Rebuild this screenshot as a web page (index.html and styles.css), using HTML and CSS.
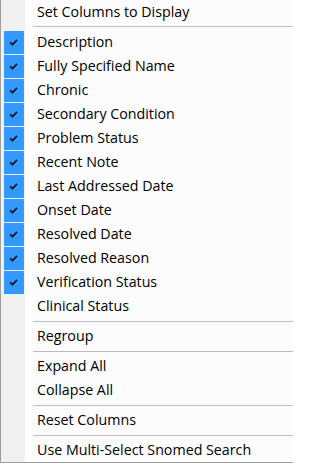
FILE: index.html
```html
<!DOCTYPE html>
<html>
<head>
<meta charset="utf-8">
<link rel="stylesheet" href="styles.css">
</head>
<body>
<div class="menu">
  <div class="item"><span class="gutter"></span><span class="label">Set Columns to Display</span></div>
  <div class="sep"><span class="gutter"></span><span class="line"></span></div>
  <div class="item checked"><span class="gutter"><span class="box"><svg width="9" height="7" viewBox="0 0 9 7"><path d="M1 3.2 L3.4 5.6 L8 1" fill="none" stroke="#000" stroke-width="1.6"/></svg></span></span><span class="label">Description</span></div>
  <div class="item checked"><span class="gutter"><span class="box"><svg width="9" height="7" viewBox="0 0 9 7"><path d="M1 3.2 L3.4 5.6 L8 1" fill="none" stroke="#000" stroke-width="1.6"/></svg></span></span><span class="label">Fully Specified Name</span></div>
  <div class="item checked"><span class="gutter"><span class="box"><svg width="9" height="7" viewBox="0 0 9 7"><path d="M1 3.2 L3.4 5.6 L8 1" fill="none" stroke="#000" stroke-width="1.6"/></svg></span></span><span class="label">Chronic</span></div>
  <div class="item checked"><span class="gutter"><span class="box"><svg width="9" height="7" viewBox="0 0 9 7"><path d="M1 3.2 L3.4 5.6 L8 1" fill="none" stroke="#000" stroke-width="1.6"/></svg></span></span><span class="label">Secondary Condition</span></div>
  <div class="item checked"><span class="gutter"><span class="box"><svg width="9" height="7" viewBox="0 0 9 7"><path d="M1 3.2 L3.4 5.6 L8 1" fill="none" stroke="#000" stroke-width="1.6"/></svg></span></span><span class="label">Problem Status</span></div>
  <div class="item checked"><span class="gutter"><span class="box"><svg width="9" height="7" viewBox="0 0 9 7"><path d="M1 3.2 L3.4 5.6 L8 1" fill="none" stroke="#000" stroke-width="1.6"/></svg></span></span><span class="label">Recent Note</span></div>
  <div class="item checked"><span class="gutter"><span class="box"><svg width="9" height="7" viewBox="0 0 9 7"><path d="M1 3.2 L3.4 5.6 L8 1" fill="none" stroke="#000" stroke-width="1.6"/></svg></span></span><span class="label">Last Addressed Date</span></div>
  <div class="item checked"><span class="gutter"><span class="box"><svg width="9" height="7" viewBox="0 0 9 7"><path d="M1 3.2 L3.4 5.6 L8 1" fill="none" stroke="#000" stroke-width="1.6"/></svg></span></span><span class="label">Onset Date</span></div>
  <div class="item checked"><span class="gutter"><span class="box"><svg width="9" height="7" viewBox="0 0 9 7"><path d="M1 3.2 L3.4 5.6 L8 1" fill="none" stroke="#000" stroke-width="1.6"/></svg></span></span><span class="label">Resolved Date</span></div>
  <div class="item checked"><span class="gutter"><span class="box"><svg width="9" height="7" viewBox="0 0 9 7"><path d="M1 3.2 L3.4 5.6 L8 1" fill="none" stroke="#000" stroke-width="1.6"/></svg></span></span><span class="label">Resolved Reason</span></div>
  <div class="item checked"><span class="gutter"><span class="box"><svg width="9" height="7" viewBox="0 0 9 7"><path d="M1 3.2 L3.4 5.6 L8 1" fill="none" stroke="#000" stroke-width="1.6"/></svg></span></span><span class="label">Verification Status</span></div>
  <div class="item"><span class="gutter"></span><span class="label">Clinical Status</span></div>
  <div class="sep"><span class="gutter"></span><span class="line"></span></div>
  <div class="item"><span class="gutter"></span><span class="label">Regroup</span></div>
  <div class="sep"><span class="gutter"></span><span class="line"></span></div>
  <div class="item"><span class="gutter"></span><span class="label">Expand All</span></div>
  <div class="item"><span class="gutter"></span><span class="label">Collapse All</span></div>
  <div class="sep"><span class="gutter"></span><span class="line"></span></div>
  <div class="item"><span class="gutter"></span><span class="label">Reset Columns</span></div>
  <div class="sep"><span class="gutter"></span><span class="line"></span></div>
  <div class="item"><span class="gutter"></span><span class="label">Use Multi-Select Snomed Search</span></div>
</div>
</body>
</html>
```

FILE: styles.css
```css
html, body {
  margin: 0;
  padding: 0;
  background: #ffffff;
}
.menu {
  width: 292px;
  height: 462px;
  border-left: 1px solid #a0a0a0;
  border-bottom: 1px solid #a0a0a0;
  background: #fcfcfc;
  display: flex;
  flex-direction: column;
  font-family: "Open Sans", "Noto Sans", sans-serif;
  font-size: 14.25px;
  color: #000;
}
.item {
  height: 24px;
  display: flex;
  align-items: stretch;
}
.gutter {
  width: 24px;
  flex: none;
  background: #f0f0f0;
  display: flex;
  justify-content: center;
  align-items: flex-start;
}
.label {
  padding-left: 12px;
  display: flex;
  align-items: center;
  white-space: nowrap;
  line-height: 24px;
}
.box {
  margin-top: 1px;
  width: 20px;
  height: 23px;
  margin-left: 1px;
  background: #3399ff;
  display: flex;
  align-items: center;
  justify-content: center;
}
.box svg {
  display: block;
}
.sep {
  height: 6px;
  display: flex;
}
.sep .line {
  flex: 1;
  margin-left: 8px;
  margin-top: 3px;
  height: 1px;
  background: #bdbdbd;
}
.menu > .sep:nth-child(2) .line {
  margin-top: 2px;
}
```
